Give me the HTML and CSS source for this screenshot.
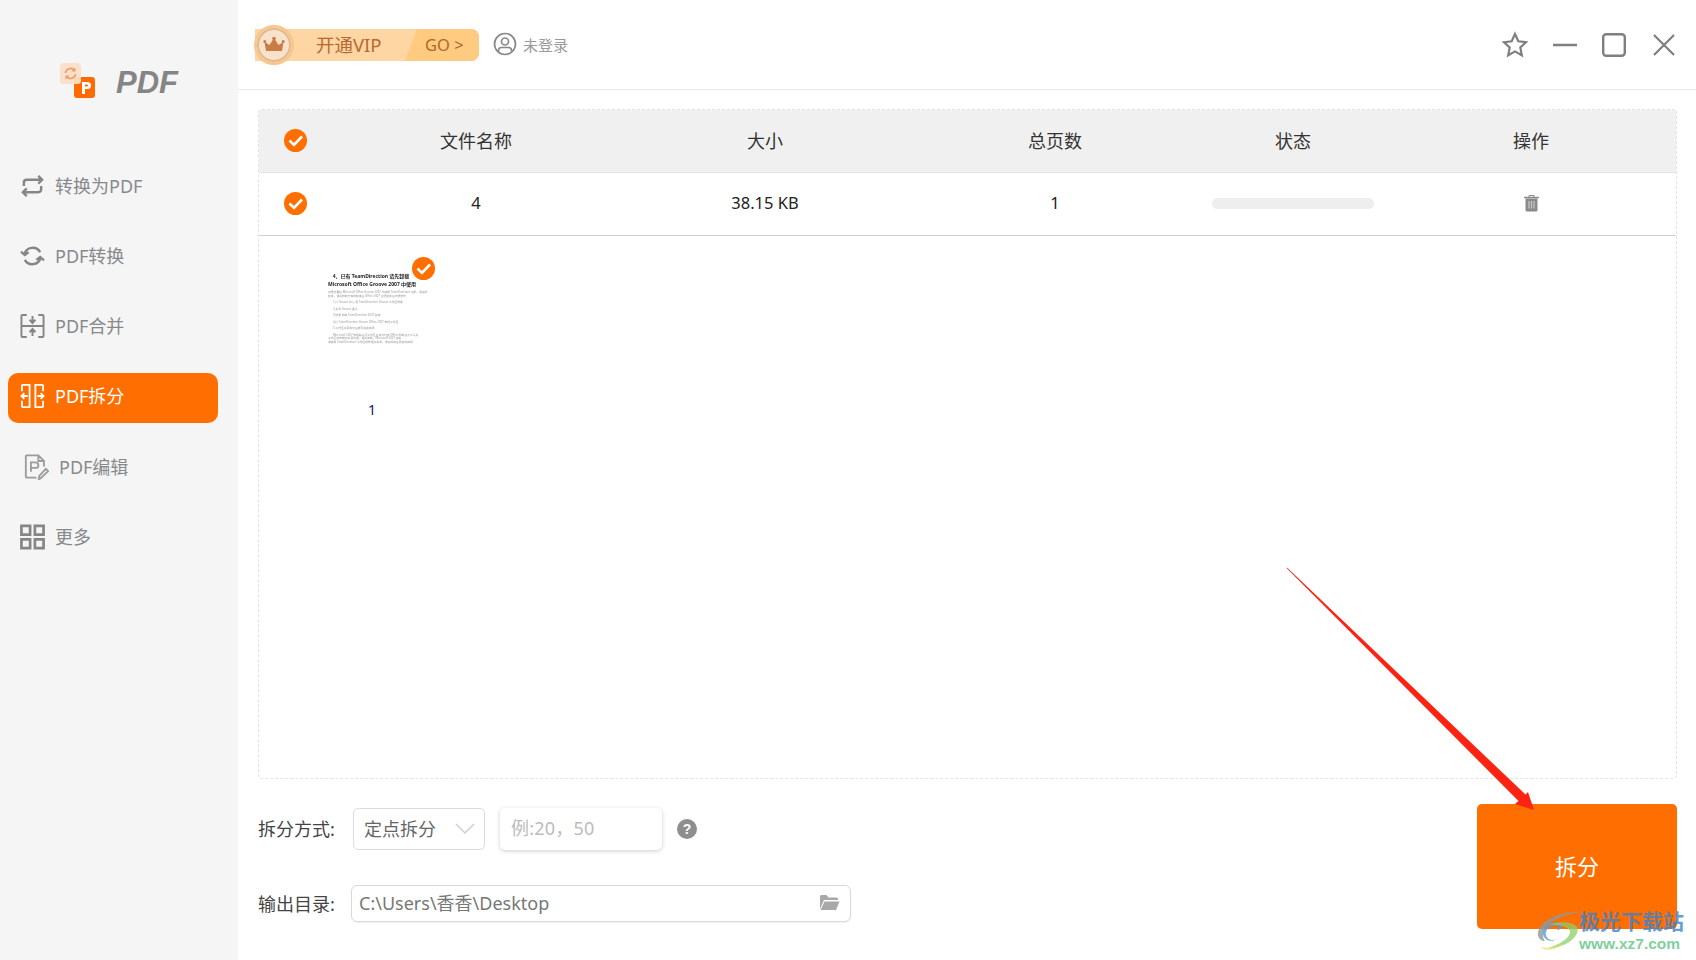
FILE: index.html
```html
<!DOCTYPE html>
<html lang="zh-CN">
<head>
<meta charset="utf-8">
<title>PDF拆分</title>
<link rel="stylesheet" href="styles.css">
</head>
<body>
<div class="app">
  <aside class="sidebar">
    <div class="logo">
      <svg class="logo-mark" width="36" height="36" viewBox="0 0 36 36">
        <rect x="14" y="14" width="21" height="21" rx="3" fill="#ff6b00"/>
        <path d="M22 19h5.500a3.500 3.500 0 0 1 0 7H25v5h-3zM25 21.500v2h2a1 1 0 0 0 0-2z" fill="#fff" fill-rule="evenodd"/>
        <rect x="0" y="0" width="21" height="21" rx="3.500" fill="#f9dfca" opacity=".94"/>
        <path d="M5.500 10a5 5 0 0 1 9-2.500M15.500 11a5 5 0 0 1-9 2.500" fill="none" stroke="#f59a5c" stroke-width="1.600"/>
        <path d="M15.500 4.500v4h-4zM5.500 16.500v-4h4z" fill="#f59a5c"/>
      </svg>
      <span class="logo-text">PDF</span>
    </div>
    <nav class="nav">
      <a class="nav-item">
        <svg class="nav-icon bold" viewBox="0 0 26 26"><path d="M4 13V9.500a3 3 0 0 1 3-3h15M19 2.500l4 4-4 4M22 13v3.500a3 3 0 0 1-3 3H4M7 15.500l-4 4 4 4" /></svg>
        <span>转换为PDF</span>
      </a>
      <a class="nav-item">
        <svg class="nav-icon bold" viewBox="0 0 26 26"><path d="M4.500 11A9 9 0 0 1 21 9M21.500 15A9 9 0 0 1 5 17M1 8.500l4 3.500 4-3M25 17.500L21 14l-4 3"/></svg>
        <span>PDF转换</span>
      </a>
      <a class="nav-item">
        <svg class="nav-icon" viewBox="0 0 26 26"><path d="M7 1.500H2.500a1 1 0 0 0-1 1v21a1 1 0 0 0 1 1H7M19 1.500h4.500a1 1 0 0 1 1 1v21a1 1 0 0 1-1 1H19M1.500 13h23M13 2.500V9M10 6.500L13 10l3-3.500M13 23.500V17M10 19.500L13 16l3 3.500"/></svg>
        <span>PDF合并</span>
      </a>
      <a class="nav-item active">
        <svg class="nav-icon" viewBox="0 0 26 26"><path d="M2 8V2.500a1 1 0 0 1 1-1h7v23H3a1 1 0 0 1-1-1V18M24 8V2.500a1 1 0 0 0-1-1h-7v23h7a1 1 0 0 0 1-1V18M1.500 13h6.500M4.500 10L1.500 13l3 3M18 13h6.500M21.500 10l3 3-3 3"/></svg>
        <span>PDF拆分</span>
      </a>
      <a class="nav-item inset">
        <svg class="nav-icon soft" viewBox="0 0 26 28"><path d="M13 25.500H2.500a1 1 0 0 1-1-1v-22a1 1 0 0 1 1-1H15l6 6v6M15 1.500v6h6M7 19V9h5a3 3 0 0 1 0 6H7M17 26.500l-1.500.5.500-3.500 7-7.500 2.500 2.500z"/></svg>
        <span>PDF编辑</span>
      </a>
      <a class="nav-item">
        <svg class="nav-icon solid" viewBox="0 0 26 26"><path d="M1.500 1.500h9v9h-9zM15.500 1.500h9v9h-9zM1.500 15.500h9v9h-9zM15.500 15.500h9v9h-9z"/></svg>
        <span>更多</span>
      </a>
    </nav>
  </aside>

  <main class="main">
    <header class="topbar">
      <div class="vip">
        <span class="crown">
          <svg width="22" height="18" viewBox="0 0 22 18"><path d="M3 15L1.500 6l5 3L11 2l4.500 7 5-3L19 15z" fill="#c97c48"/><circle cx="11" cy="2.500" r="1.800" fill="#c97c48"/><circle cx="1.800" cy="5.500" r="1.500" fill="#c97c48"/><circle cx="20.200" cy="5.500" r="1.500" fill="#c97c48"/></svg>
        </span>
        <span class="vip-label">开通VIP</span>
        <span class="vip-go">GO &gt;</span>
      </div>
      <div class="user">
        <svg width="24" height="24" viewBox="0 0 24 24" fill="none" stroke="#888" stroke-width="1.700"><circle cx="12" cy="12" r="10.500"/><circle cx="12" cy="9.500" r="3.500"/><path d="M5.500 19.500v-1a3 3 0 0 1 3-3h7a3 3 0 0 1 3 3v1"/></svg>
        <span>未登录</span>
      </div>
      <div class="win-controls">
        <svg class="win-star" width="28" height="28" viewBox="0 0 28 28"><path d="M14 3l3.300 7.300 7.700.9-5.700 5.300 1.500 7.800L14 20.400l-6.800 3.900 1.500-7.800L3 11.200l7.700-.9z"/></svg>
        <svg class="win-min" width="24" height="4" viewBox="0 0 24 4"><path d="M0 2h24"/></svg>
        <svg class="win-max" width="24" height="24" viewBox="0 0 24 24"><rect x="1.200" y="1.200" width="21.600" height="21.600" rx="3"/></svg>
        <svg class="win-close" width="22" height="22" viewBox="0 0 22 22"><path d="M1 1l20 20M21 1L1 21"/></svg>
      </div>
    </header>

    <div class="content">
      <section class="panel">
        <div class="row head">
          <span class="check"><svg viewBox="0 0 23 23"><path d="M5.500 11.500l4.500 4.500 8-8.500"/></svg></span>
          <span>文件名称</span>
          <span>大小</span>
          <span>总页数</span>
          <span>状态</span>
          <span>操作</span>
        </div>
        <div class="row file">
          <span class="check"><svg viewBox="0 0 23 23"><path d="M5.500 11.500l4.500 4.500 8-8.500"/></svg></span>
          <span class="cell-text">4</span>
          <span class="cell-text">38.15 KB</span>
          <span class="cell-text">1</span>
          <span class="progress"></span>
          <span class="trash">
            <svg width="17" height="18" viewBox="0 0 17 18"><path d="M1 3.500h15" stroke="#8a8a8a" stroke-width="1.500" fill="none"/><path d="M6 3V1.500h5V3" stroke="#8a8a8a" fill="none"/><path d="M2.500 4.500h12V16a1.500 1.500 0 0 1-1.500 1.500H4A1.500 1.500 0 0 1 2.500 16z" fill="#8a8a8a"/><path d="M6 7v7.500M8.500 7v7.500M11 7v7.500" stroke="#c9c9c9" stroke-width="1.200"/></svg>
          </span>
        </div>
        <div class="pages">
          <figure class="page">
            <div class="thumb">
              <p class="t-title">4、已有 TeamDirection 请先卸载</p>
              <p class="t-title">Microsoft Office Groove 2007 中使用</p>
              <p class="t-body gap-a">如果您要在 Microsoft Office Groove 2007 中使用 TeamDirection 功能，请先卸</p>
              <p class="t-body">版本，请先卸载已有的版本后 Office 2007 主题版本后才能安装</p>
              <p class="t-body gap-b ind">1.打 Groove 中心 用 TeamDirection Groove 工作区管理</p>
              <p class="t-body gap-b ind">2.关闭 Groove 程序</p>
              <p class="t-body gap-b ind">3.依照 卸载 TeamDirection 2007 版本</p>
              <p class="t-body gap-b ind">4.打 TeamDirection Groove Office 2007 管理工作区</p>
              <p class="t-body gap-b ind">5.工作区设置完毕后就可继续使用</p>
              <p class="t-body gap-b ind">Microsoft 2007 管理器以及工作区名称与内容 Office 卸载后不会丢失</p>
              <p class="t-body">工作区的管理和设置内容，请先卸载，Microsoft 2007 版本</p>
              <p class="t-body">请使用 TeamDirection 工作区的管理和设置，请先卸载后再安装使用</p>
            </div>
            <span class="check page-check"><svg viewBox="0 0 23 23"><path d="M5.500 11.500l4.500 4.500 8-8.500"/></svg></span>
            <figcaption>1</figcaption>
          </figure>
        </div>
      </section>

      <div class="bottom">
        <div class="form">
          <div class="form-row">
            <label class="form-label">拆分方式:</label>
            <div class="select">
              <span>定点拆分</span>
              <svg width="20" height="11" viewBox="0 0 20 11"><path d="M1 1l9 9 9-9" fill="none" stroke="#d0d0d0" stroke-width="1.500"/></svg>
            </div>
            <div class="number-input">例:20，50</div>
            <span class="help">?</span>
          </div>
          <div class="form-row second">
            <label class="form-label short">输出目录:</label>
            <div class="path">
              <span>C:\Users\香香\Desktop</span>
              <svg width="21" height="17" viewBox="0 0 21 17"><path d="M1 2.500A1.500 1.500 0 0 1 2.500 1h5L9.500 3.500h8A1.500 1.500 0 0 1 19 5v1H5L1 15z" fill="#a8a8a8"/><path d="M5.500 7.500H20.500L17 16H1.500z" fill="#a8a8a8"/></svg>
            </div>
          </div>
        </div>
        <button class="split-btn">拆分</button>
      </div>
    </div>
  </main>
</div>

<svg class="arrow" width="260" height="260" viewBox="1280 560 260 260"><polygon points="1287,567.500 1525.500,794.500 1528,792 1534,810 1515,804 1518.500,801 1287,568.500" fill="#fb2413"/></svg>

<div class="watermark">
  <svg class="wm-logo" width="44" height="40" viewBox="0 0 44 40">
    <path d="M43 1C28 0 8 6 2 18c-3 6 0 12 6 12C3 24 8 14 20 8 28 4 36 2 43 1z" fill="#8d9a9a" opacity=".8"/>
    <path d="M6 22c0-7 9-12 16-10 5 2 3 7-2 7 3-3 0-5-4-4-5 1-8 5-7 9 1 5 7 6 11 4-6 4-14 1-14-6z" fill="#5b9bd8" opacity=".8"/>
    <path d="M12 14c8-4 24-4 28 2 3 6-4 15-16 19-6 2-12 3-15 3 8-3 22-8 24-16 1-6-11-9-21-8z" fill="#8ccf6a" opacity=".75"/>
    <path d="M4 36c8 2 16 0 22-3-4 5-18 8-22 3z" fill="#f0df70" opacity=".8"/>
  </svg>
  <div class="wm-text">
    <span class="wm-cn">极光下载站</span>
    <span class="wm-en">www.xz7.com</span>
  </div>
</div>
</body>
</html>
```
FILE: styles.css
```css
* { box-sizing: border-box; }
html, body { margin: 0; height: 100%; }
body {
  position: relative;
  width: 1696px;
  height: 960px;
  overflow: hidden;
  background: #fff;
  color: #333;
  font-family: "Noto Sans", "Noto Sans CJK SC", sans-serif;
  font-size: 18px;
}
.app { display: flex; height: 960px; }

/* sidebar */
.sidebar { width: 238px; flex: none; background: #f5f5f5; }
.logo { height: 161px; padding: 63px 0 0 60px; display: flex; align-items: flex-start; }
.logo-mark { flex: none; }
.logo-text {
  margin-left: 20px;
  margin-top: 2px;
  font: italic bold 31px/36px "Liberation Sans", sans-serif;
  color: #858585;
}
.nav { display: flex; flex-direction: column; gap: 20px; padding: 0 20px 0 8px; }
.nav-item {
  height: 50px;
  display: flex;
  align-items: center;
  gap: 10px;
  padding-left: 12px;
  padding-bottom: 1px;
  border-radius: 10px;
  color: #87898c;
  line-height: 26px;
}
.nav-item.inset { padding-left: 16px; }
.nav-item.active {
  background: #ff6e00;
  color: #fff;
  margin-top: 2px;
  margin-bottom: -1px;
  padding-bottom: 4px;
}
.nav-icon {
  width: 25px;
  height: 26px;
  flex: none;
  fill: none;
  stroke: #868686;
  stroke-width: 2;
}
.nav-icon.bold { stroke-width: 2.500; }
.nav-icon.soft { stroke: #9c9c9c; }
.nav-icon.solid { stroke-width: 2.800; }
.active .nav-icon { stroke: #fff; stroke-width: 1.900; }

/* main */
.main { flex: 1; min-width: 0; display: flex; flex-direction: column; }
.topbar {
  height: 90px;
  flex: none;
  display: flex;
  align-items: center;
  padding: 0 21px 1px 16px;
  border-bottom: 1px solid #e8e8e8;
}
.vip {
  width: 224px;
  height: 32px;
  display: flex;
  align-items: center;
  position: relative;
  margin-left: 1px;
  margin-top: 1px;
  border-radius: 0 8px 8px 0;
  background: #fdd6a3;
}
.crown {
  position: absolute;
  left: -1px;
  top: -4px;
  width: 40px;
  height: 40px;
  border-radius: 50%;
  display: flex;
  align-items: center;
  justify-content: center;
  background: #f8e3ca;
  border: 3px solid #f9c68e;
  box-shadow: inset 0 0 0 2px #e2b98e;
}
.vip-label { margin-left: 61px; width: 89px; color: #b8692f; font-size: 18.500px; line-height: 26px; white-space: nowrap; }
.vip-go {
  flex: none;
  width: 74px;
  height: 32px;
  padding-left: 20px;
  color: #b0662a;
  font-size: 16.500px;
  line-height: 32px;
  border-radius: 0 8px 8px 0;
  background:
    linear-gradient(to bottom right, transparent 49%, #fecb80 51%) 0 0 / 12px 100% no-repeat,
    linear-gradient(#fecb80, #fecb80) 12px 0 / 100% 100% no-repeat;
}
.user { display: flex; align-items: center; gap: 6px; margin-left: 14px; color: #9a9a9a; font-size: 15px; }
.win-controls { margin-left: auto; margin-top: 2px; display: flex; align-items: center; }
.win-star { fill: none; stroke: #7f7f7f; stroke-width: 2.200; margin-right: 2px; }
.win-min { margin-left: 22px; stroke: #7f7f7f; stroke-width: 2.500; }
.win-max { margin-left: 25px; fill: none; stroke: #7f7f7f; stroke-width: 2.400; }
.win-close { margin-left: 27px; fill: none; stroke: #7f7f7f; stroke-width: 2.200; }

.content { flex: 1; padding: 19px 19px 0 20px; }
.panel {
  height: 670px;
  border: 1px dashed #e2e2e2;
  border-radius: 4px;
}
.row {
  display: grid;
  grid-template-columns: 73px 288px 290px 290px 186px 290px;
  align-items: center;
  text-align: center;
  padding-bottom: 2px;
}
.head { height: 63px; background: #f0f0f0; color: #333; border-bottom: 1px solid #e4e4e4; }
.file { height: 63px; color: #222; font-size: 16.500px; border-bottom: 1px solid #cfcfcf; }
.cell-text { position: relative; top: -1px; }
.check {
  width: 23px;
  height: 23px;
  margin-left: 25px;
  border-radius: 50%;
  background: #ff6e00;
  display: block;
}
.check svg { display: block; width: 23px; height: 23px; fill: none; stroke: #fff; stroke-width: 2.600; }
.progress { width: 162px; height: 11px; margin: 0 auto; border-radius: 6px; background: #eeeeee; }
.trash { display: flex; justify-content: center; }
.trash svg { display: block; }

.pages { padding: 15px 0 0 60px; }
.page { position: relative; margin: 0; width: 106px; }
.thumb { height: 149px; padding: 21px 0 0 9px; filter: blur(.6px); }
.thumb p { margin: 0; white-space: nowrap; width: 86px; }
.t-title { font-size: 5px; line-height: 8px; font-weight: 700; color: #222; text-align: center; }
.t-body { font-size: 2.800px; line-height: 3.500px; color: #999; }
.thumb .gap-a { margin-top: 3px; }
.thumb .gap-b { margin-top: 3px; }
.thumb .ind { padding-left: 5px; }
.page-check { position: absolute; left: 93px; top: 6px; margin: 0; }
.page figcaption { text-align: center; font-size: 14px; line-height: 20px; color: #11116b; }

/* bottom */
.bottom { display: flex; justify-content: space-between; margin-top: 25px; }
.form { padding-top: 4px; }
.form-row { display: flex; align-items: center; height: 42px; }
.form-row.second { height: 37px; margin-top: 35px; }
.form-label { width: 95px; flex: none; color: #444; padding-bottom: 2px; }
.form-label.short { width: 93px; }
.select {
  width: 132px;
  height: 42px;
  display: flex;
  align-items: center;
  justify-content: space-between;
  padding: 0 9px 2px 10px;
  border: 1px solid #dcdcdc;
  border-radius: 5px;
  color: #666;
}
.number-input {
  width: 162px;
  height: 42px;
  margin-left: 15px;
  padding-left: 11px;
  line-height: 40px;
  letter-spacing: .2px;
  color: #bbb;
  border-radius: 5px;
  box-shadow: 0 1px 4px rgba(0,0,0,.2);
}
.help {
  width: 20px;
  height: 20px;
  margin-left: 15px;
  border-radius: 50%;
  background: #8e8e8e;
  color: #fff;
  font: bold 14px/20px "Liberation Sans", sans-serif;
  text-align: center;
}
.path {
  width: 500px;
  height: 37px;
  display: flex;
  align-items: center;
  justify-content: space-between;
  padding: 0 10px 3px 7px;
  border: 1px solid #d8d8d8;
  border-radius: 6px;
  color: #777;
  box-shadow: 0 1px 2px rgba(0,0,0,.06);
}
.split-btn {
  width: 200px;
  height: 125px;
  padding: 0 0 3px;
  border: 0;
  border-radius: 5px;
  background: #ff6e00;
  color: #fff;
  font: inherit;
  font-size: 22px;
}

/* overlays */
.arrow { position: absolute; left: 1280px; top: 560px; }
.watermark { position: absolute; left: 1537px; top: 908px; display: flex; }
.wm-logo { flex: none; margin-top: 3px; margin-right: -2px; }
.wm-text { display: flex; flex-direction: column; }
.wm-cn { font: bold 21px/25px "Noto Sans CJK SC", sans-serif; color: rgba(58, 130, 205, .8); }
.wm-en { margin-top: 3px; font: bold 15.500px/16px "Liberation Sans", sans-serif; color: rgba(90, 195, 130, .8); }
```
